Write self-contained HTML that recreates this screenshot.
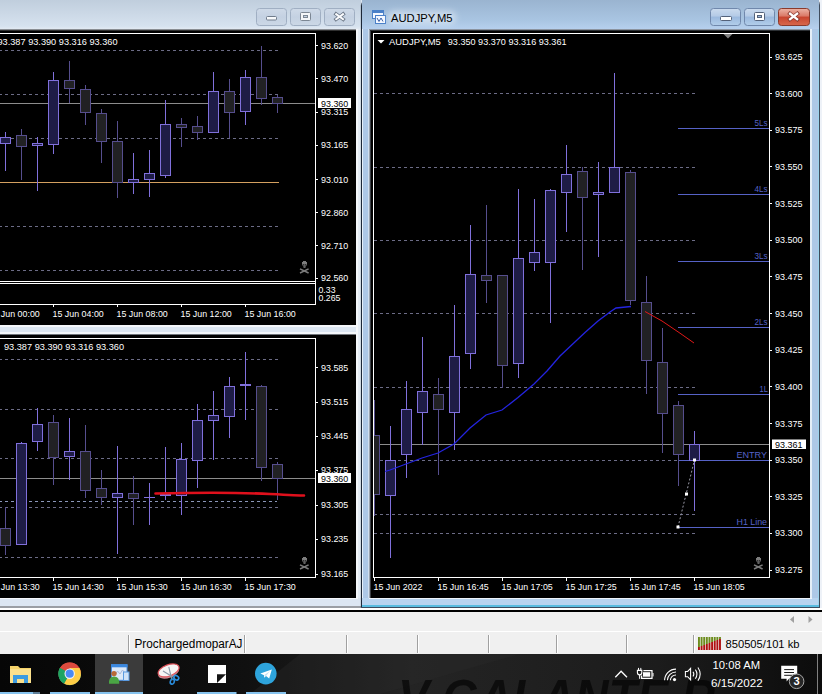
<!DOCTYPE html>
<html><head><meta charset="utf-8"><title>AUDJPY,M5</title>
<style>html,body{margin:0;padding:0;background:#000;overflow:hidden}svg{display:block}text{font-family:"Liberation Sans",sans-serif;white-space:pre}</style>
</head><body>
<svg width="822" height="694" viewBox="0 0 822 694">
<defs>
<linearGradient id="gInact" x1="0" y1="0" x2="0" y2="1"><stop offset="0" stop-color="#c0cedd"/><stop offset="0.9" stop-color="#d6e2ef"/><stop offset="1" stop-color="#e2eaf3"/></linearGradient>
<linearGradient id="gAct" x1="0" y1="0" x2="0" y2="1"><stop offset="0" stop-color="#9ab4d0"/><stop offset="0.7" stop-color="#a9c5e2"/><stop offset="1" stop-color="#b6d0ee"/></linearGradient>
<linearGradient id="gBtnI" x1="0" y1="0" x2="0" y2="1"><stop offset="0" stop-color="#cfdae8"/><stop offset="0.5" stop-color="#c4d1e2"/><stop offset="1" stop-color="#ccd8e6"/></linearGradient>
<linearGradient id="gBtnA" x1="0" y1="0" x2="0" y2="1"><stop offset="0" stop-color="#cbdbee"/><stop offset="0.45" stop-color="#b4cae6"/><stop offset="0.5" stop-color="#9bb9de"/><stop offset="1" stop-color="#b2ceea"/></linearGradient>
<linearGradient id="gClose" x1="0" y1="0" x2="0" y2="1"><stop offset="0" stop-color="#ecb4a6"/><stop offset="0.45" stop-color="#da7866"/><stop offset="0.5" stop-color="#c8442e"/><stop offset="1" stop-color="#d8684c"/></linearGradient>
<linearGradient id="gTask" x1="0" y1="0" x2="1" y2="0"><stop offset="0" stop-color="#060606"/><stop offset="0.3" stop-color="#101010"/><stop offset="0.5" stop-color="#242424"/><stop offset="0.8" stop-color="#1c1c1c"/><stop offset="1" stop-color="#0c0c0c"/></linearGradient>
</defs>
<rect x="0" y="0" width="361" height="608" fill="#dce6f2" />
<rect x="0" y="0" width="361" height="29" fill="url(#gInact)" />
<rect x="0" y="29" width="356" height="1" fill="#8a8e94" />
<rect x="0" y="30" width="356" height="1" fill="#303030" />
<rect x="0" y="31" width="356" height="294" fill="#000" />
<rect x="0" y="325" width="356" height="2" fill="#f4f7fb" />
<rect x="0" y="327" width="356" height="5" fill="#dce6f2" />
<rect x="0" y="332" width="356" height="2" fill="#f4f7fb" />
<rect x="0" y="334" width="356" height="1" fill="#70747a" />
<rect x="0" y="335" width="356" height="263" fill="#000" />
<rect x="356" y="29" width="2" height="579" fill="#f4f7fb" />
<rect x="358" y="29" width="3" height="579" fill="#e4ecf5" />
<rect x="0" y="598" width="361" height="8" fill="#dce6f2" />
<rect x="0" y="598" width="358" height="1" fill="#f4f7fb" />
<rect x="0" y="606" width="361" height="2" fill="#9a9ea4" />
<rect x="815" y="0" width="7" height="608" fill="#eef2f8" />
<path d="M361 608 V6 Q361 0 367 0 H814 Q819.5 0 819.5 6 V608 Z" fill="#adc8e7"/>
<path d="M361.5 608 V5 Q361.5 -0.5 367 -0.5 H814 Q819.2 -0.5 819.2 5 V608" fill="none" stroke="#1c2838" stroke-width="1.2"/>
<path d="M362 0 H361 V6 Q361 0 367 0 Z" fill="#dce6f2"/>
<rect x="362" y="0" width="457" height="29" fill="url(#gAct)" />
<rect x="362" y="29" width="1" height="578" fill="#e6f0fa" />
<rect x="363" y="29" width="5" height="578" fill="#adc8e7" />
<rect x="368" y="29" width="1" height="570" fill="#d0dff0" />
<rect x="812" y="29" width="6" height="578" fill="#adc8e7" />
<rect x="818" y="29" width="1" height="578" fill="#9cd4ee" />
<rect x="810" y="29" width="2" height="578" fill="#e4eef8" />
<rect x="362" y="598" width="456" height="8" fill="#b8d4f0" />
<rect x="369" y="598" width="443" height="1" fill="#eef4fb" />
<rect x="362" y="605" width="457" height="2" fill="#58bce0" />
<rect x="361" y="607" width="458" height="1" fill="#3c4c60" />
<rect x="369" y="29" width="441" height="1" fill="#8c94a0" />
<rect x="369" y="30" width="1" height="568" fill="#9aa4b0" />
<rect x="370" y="30" width="1" height="568" fill="#3c4046" />
<rect x="371" y="30" width="439" height="568" fill="#000" />
<rect x="370" y="30" width="440" height="1" fill="#2c3034" />
<rect x="0" y="608" width="822" height="2" fill="#fff" />
<rect x="0" y="610" width="822" height="2" fill="#000" />
<rect x="0" y="612" width="822" height="42" fill="#f0f0f0" />
<rect x="0" y="631" width="822" height="1" fill="#fff" />
<rect x="256.5" y="8.5" width="30" height="17" rx="3" fill="url(#gBtnI)" stroke="#a0afc3"/>
<rect x="290.5" y="8.5" width="30" height="17" rx="3" fill="url(#gBtnI)" stroke="#a0afc3"/>
<rect x="324.5" y="8.5" width="30" height="17" rx="3" fill="url(#gBtnI)" stroke="#a0afc3"/>
<rect x="266.5" y="16.5" width="10" height="3.5" rx="1" fill="#f8fafc" stroke="#707c8c"/>
<rect x="300.5" y="12.5" width="10" height="8" rx="1" fill="#f4f6f9" stroke="#7c8794"/><rect x="303.5" y="15.5" width="4" height="2" fill="#c4d1e2" stroke="#7c8794"/>
<g stroke-linecap="butt"><path d="M334.6 13 L344.6 20.4 M344.6 13 L334.6 20.4" stroke="#6c7888" stroke-width="3.6" fill="none"/><path d="M335.4 13.6 L343.8 19.8 M343.8 13.6 L335.4 19.8" stroke="#fafbfd" stroke-width="2" fill="none"/></g>
<rect x="710.5" y="8.5" width="30" height="17" rx="3" fill="url(#gBtnA)" stroke="#7088ac"/>
<rect x="744.5" y="8.5" width="30" height="17" rx="3" fill="url(#gBtnA)" stroke="#7088ac"/>
<rect x="778.5" y="8.5" width="31" height="17" rx="3" fill="url(#gClose)" stroke="#8a3a2c"/>
<rect x="720.5" y="16.5" width="11" height="4" rx="1" fill="#fff" stroke="#54627a"/>
<rect x="754.5" y="12.5" width="10" height="8" rx="1" fill="#fff" stroke="#54627a"/><rect x="757.5" y="15.5" width="4" height="2" fill="#9fbbdc" stroke="#54627a"/>
<g stroke-linecap="butt"><path d="M788.4 12.4 L798.8 20.4 M798.8 12.4 L788.4 20.4" stroke="#8a3a30" stroke-width="3.8" fill="none"/><path d="M789.2 13 L798 19.8 M798 13 L789.2 19.8" stroke="#fff" stroke-width="2.3" fill="none"/></g>
<g><rect x="372.5" y="10.5" width="11" height="8" fill="#f4f8ff" stroke="#4a80c8"/><rect x="372.5" y="10.5" width="11" height="2" fill="#4a80c8" stroke="#4a80c8"/><rect x="375.5" y="15.5" width="10" height="8" fill="#f4f8ff" stroke="#4a80c8"/><path d="M377 18 L379 21.5 L381 18 L383 21.5" fill="none" stroke="#3a60a8" stroke-width="1"/></g>
<filter id="fGlow" x="-20%" y="-80%" width="140%" height="260%"><feGaussianBlur stdDeviation="3"/></filter><rect x="388" y="11" width="68" height="13" rx="6" fill="#fff" opacity="0.45" filter="url(#fGlow)"/>
<text x="391" y="21.6" font-size="11" fill="#000" textLength="61.5" lengthAdjust="spacingAndGlyphs" >AUDJPY,M5</text>
<line x1="0" y1="50.5" x2="279" y2="50.5" stroke="#6c6c86" stroke-width="1" stroke-dasharray="3 3" stroke-dashoffset="1"/>
<line x1="0" y1="94.5" x2="279" y2="94.5" stroke="#6c6c86" stroke-width="1" stroke-dasharray="3 3" stroke-dashoffset="1"/>
<line x1="0" y1="138.5" x2="279" y2="138.5" stroke="#6c6c86" stroke-width="1" stroke-dasharray="3 3" stroke-dashoffset="1"/>
<line x1="0" y1="226.5" x2="279" y2="226.5" stroke="#6c6c86" stroke-width="1" stroke-dasharray="3 3" stroke-dashoffset="1"/>
<line x1="0" y1="270.5" x2="279" y2="270.5" stroke="#6c6c86" stroke-width="1" stroke-dasharray="3 3" stroke-dashoffset="1"/>
<rect x="0" y="103" width="315" height="1" fill="#8c8c8c" />
<rect x="0" y="182" width="279" height="1" fill="#d4a060" />
<g shape-rendering="crispEdges">
<rect x="5" y="132" width="1" height="39" fill="#8070dc" />
<rect x="0.5" y="137.5" width="10" height="6" fill="#1e1c46" stroke="#8070dc" stroke-width="1"/>
<rect x="21" y="129" width="1" height="51" fill="#564e8e" />
<rect x="16.5" y="135.5" width="10" height="11" fill="#212124" stroke="#564e8e" stroke-width="1"/>
<rect x="37" y="137" width="1" height="54" fill="#8070dc" />
<rect x="32.5" y="143.5" width="10" height="2" fill="#1e1c46" stroke="#8070dc" stroke-width="1"/>
<rect x="53" y="72" width="1" height="82" fill="#8070dc" />
<rect x="48.5" y="80.5" width="10" height="64" fill="#1e1c46" stroke="#8070dc" stroke-width="1"/>
<rect x="69" y="61" width="1" height="42" fill="#564e8e" />
<rect x="64.5" y="80.5" width="10" height="8" fill="#212124" stroke="#564e8e" stroke-width="1"/>
<rect x="85" y="85" width="1" height="40" fill="#564e8e" />
<rect x="80.5" y="89.5" width="10" height="23" fill="#212124" stroke="#564e8e" stroke-width="1"/>
<rect x="101" y="109" width="1" height="54" fill="#564e8e" />
<rect x="96.5" y="113.5" width="10" height="28" fill="#212124" stroke="#564e8e" stroke-width="1"/>
<rect x="117" y="121" width="1" height="77" fill="#564e8e" />
<rect x="112.5" y="141.5" width="10" height="41" fill="#212124" stroke="#564e8e" stroke-width="1"/>
<rect x="133" y="153" width="1" height="41" fill="#8070dc" />
<rect x="128.5" y="179.5" width="10" height="3" fill="#1e1c46" stroke="#8070dc" stroke-width="1"/>
<rect x="149" y="150" width="1" height="47" fill="#8070dc" />
<rect x="144.5" y="173.5" width="10" height="6" fill="#1e1c46" stroke="#8070dc" stroke-width="1"/>
<rect x="165" y="100" width="1" height="78" fill="#8070dc" />
<rect x="160.5" y="124.5" width="10" height="51" fill="#1e1c46" stroke="#8070dc" stroke-width="1"/>
<rect x="181" y="118" width="1" height="29" fill="#564e8e" />
<rect x="176.5" y="124.5" width="10" height="3" fill="#212124" stroke="#564e8e" stroke-width="1"/>
<rect x="197" y="116" width="1" height="24" fill="#564e8e" />
<rect x="192.5" y="126.5" width="10" height="6" fill="#212124" stroke="#564e8e" stroke-width="1"/>
<rect x="213" y="72" width="1" height="61" fill="#8070dc" />
<rect x="208.5" y="91.5" width="10" height="41" fill="#1e1c46" stroke="#8070dc" stroke-width="1"/>
<rect x="229" y="79" width="1" height="59" fill="#564e8e" />
<rect x="224.5" y="91.5" width="10" height="21" fill="#212124" stroke="#564e8e" stroke-width="1"/>
<rect x="245" y="70" width="1" height="55" fill="#8070dc" />
<rect x="240.5" y="77.5" width="10" height="34" fill="#1e1c46" stroke="#8070dc" stroke-width="1"/>
<rect x="261" y="46" width="1" height="59" fill="#564e8e" />
<rect x="256.5" y="77.5" width="10" height="21" fill="#212124" stroke="#564e8e" stroke-width="1"/>
<rect x="277" y="95" width="1" height="18" fill="#564e8e" />
<rect x="272.5" y="97.5" width="10" height="6" fill="#212124" stroke="#564e8e" stroke-width="1"/>
</g>
<rect x="0" y="33" width="316" height="1" fill="#fff" />
<rect x="315" y="33" width="1" height="272" fill="#fff" />
<rect x="0" y="281" width="316" height="1" fill="#fff" />
<rect x="0" y="283" width="316" height="1" fill="#fff" />
<rect x="0" y="304" width="316" height="1" fill="#fff" />
<text x="-2.5" y="44.5" font-size="9.8" fill="#fff" textLength="120" lengthAdjust="spacingAndGlyphs" >93.387 93.390 93.316 93.360</text>
<rect x="316" y="45" width="2" height="1" fill="#fff" />
<text x="321" y="48.7" font-size="9.8" fill="#fff" textLength="27.3" lengthAdjust="spacingAndGlyphs" >93.620</text>
<rect x="316" y="78" width="2" height="1" fill="#fff" />
<text x="321" y="81.7" font-size="9.8" fill="#fff" textLength="27.3" lengthAdjust="spacingAndGlyphs" >93.470</text>
<rect x="316" y="112" width="2" height="1" fill="#fff" />
<text x="321" y="115.2" font-size="9.8" fill="#fff" textLength="27.3" lengthAdjust="spacingAndGlyphs" >93.315</text>
<rect x="316" y="145" width="2" height="1" fill="#fff" />
<text x="321" y="148.2" font-size="9.8" fill="#fff" textLength="27.3" lengthAdjust="spacingAndGlyphs" >93.165</text>
<rect x="316" y="179" width="2" height="1" fill="#fff" />
<text x="321" y="182.7" font-size="9.8" fill="#fff" textLength="27.3" lengthAdjust="spacingAndGlyphs" >93.010</text>
<rect x="316" y="212" width="2" height="1" fill="#fff" />
<text x="321" y="215.7" font-size="9.8" fill="#fff" textLength="27.3" lengthAdjust="spacingAndGlyphs" >92.860</text>
<rect x="316" y="245" width="2" height="1" fill="#fff" />
<text x="321" y="248.7" font-size="9.8" fill="#fff" textLength="27.3" lengthAdjust="spacingAndGlyphs" >92.710</text>
<rect x="316" y="278" width="2" height="1" fill="#fff" />
<text x="321" y="281.2" font-size="9.8" fill="#fff" textLength="27.3" lengthAdjust="spacingAndGlyphs" >92.560</text>
<rect x="318" y="98" width="33" height="10" fill="#fff" />
<text x="321" y="106.5" font-size="9.8" fill="#000" textLength="27.3" lengthAdjust="spacingAndGlyphs" >93.360</text>
<text x="318.5" y="293" font-size="9.8" fill="#fff" textLength="17" lengthAdjust="spacingAndGlyphs" >0.33</text>
<text x="318.5" y="301" font-size="9.8" fill="#fff" textLength="22" lengthAdjust="spacingAndGlyphs" >0.265</text>
<text x="-11.5" y="316.8" font-size="9.8" fill="#fff" textLength="51.3" lengthAdjust="spacingAndGlyphs" >15 Jun 00:00</text>
<rect x="53" y="305" width="1" height="2" fill="#fff" />
<text x="52.5" y="316.8" font-size="9.8" fill="#fff" textLength="51.3" lengthAdjust="spacingAndGlyphs" >15 Jun 04:00</text>
<rect x="117" y="305" width="1" height="2" fill="#fff" />
<text x="116.5" y="316.8" font-size="9.8" fill="#fff" textLength="51.3" lengthAdjust="spacingAndGlyphs" >15 Jun 08:00</text>
<rect x="181" y="305" width="1" height="2" fill="#fff" />
<text x="180.5" y="316.8" font-size="9.8" fill="#fff" textLength="51.3" lengthAdjust="spacingAndGlyphs" >15 Jun 12:00</text>
<rect x="245" y="305" width="1" height="2" fill="#fff" />
<text x="244.5" y="316.8" font-size="9.8" fill="#fff" textLength="51.3" lengthAdjust="spacingAndGlyphs" >15 Jun 16:00</text>
<g fill="#7c7c7c">
<rect x="303" y="261" width="3" height="1"/>
<rect x="302" y="262" width="5" height="2.4"/>
<rect x="302" y="264.4" width="1" height="1"/><rect x="304" y="264.4" width="1" height="1"/><rect x="306" y="264.4" width="1" height="1"/>
<rect x="303" y="265.4" width="3" height="1"/>
<rect x="303.5" y="266.4" width="2" height="1.4"/>
</g>
<g stroke="#7c7c7c" stroke-width="1.5" stroke-linecap="butt"><line x1="300" y1="268.8" x2="308.6" y2="273"/><line x1="308.6" y1="268.8" x2="300" y2="273"/></g>
<line x1="0" y1="359.5" x2="279" y2="359.5" stroke="#6c6c86" stroke-width="1" stroke-dasharray="3 3" stroke-dashoffset="1"/>
<line x1="0" y1="409.5" x2="279" y2="409.5" stroke="#6c6c86" stroke-width="1" stroke-dasharray="3 3" stroke-dashoffset="1"/>
<line x1="0" y1="458.5" x2="279" y2="458.5" stroke="#6c6c86" stroke-width="1" stroke-dasharray="3 3" stroke-dashoffset="1"/>
<line x1="0" y1="507.5" x2="279" y2="507.5" stroke="#6c6c86" stroke-width="1" stroke-dasharray="3 3" stroke-dashoffset="1"/>
<line x1="0" y1="557.5" x2="279" y2="557.5" stroke="#6c6c86" stroke-width="1" stroke-dasharray="3 3" stroke-dashoffset="1"/>
<line x1="0" y1="501.5" x2="277" y2="501.5" stroke="#8a96b8" stroke-width="1" stroke-dasharray="3 3" stroke-dashoffset="1"/>
<rect x="0" y="478" width="315" height="1" fill="#8c8c8c" />
<g shape-rendering="crispEdges">
<rect x="5" y="507" width="1" height="48" fill="#564e8e" />
<rect x="0.5" y="528.5" width="10" height="17" fill="#212124" stroke="#564e8e" stroke-width="1"/>
<rect x="21" y="442" width="1" height="103" fill="#8070dc" />
<rect x="16.5" y="443.5" width="10" height="101" fill="#1e1c46" stroke="#8070dc" stroke-width="1"/>
<rect x="37" y="408" width="1" height="43" fill="#8070dc" />
<rect x="32.5" y="424.5" width="10" height="17" fill="#1e1c46" stroke="#8070dc" stroke-width="1"/>
<rect x="53" y="415" width="1" height="70" fill="#564e8e" />
<rect x="48.5" y="422.5" width="10" height="35" fill="#212124" stroke="#564e8e" stroke-width="1"/>
<rect x="69" y="418" width="1" height="62" fill="#8070dc" />
<rect x="64.5" y="451.5" width="10" height="5" fill="#1e1c46" stroke="#8070dc" stroke-width="1"/>
<rect x="85" y="425" width="1" height="73" fill="#564e8e" />
<rect x="80.5" y="451.5" width="10" height="39" fill="#212124" stroke="#564e8e" stroke-width="1"/>
<rect x="101" y="470" width="1" height="35" fill="#564e8e" />
<rect x="96.5" y="488.5" width="10" height="9" fill="#212124" stroke="#564e8e" stroke-width="1"/>
<rect x="117" y="446" width="1" height="108" fill="#8070dc" />
<rect x="112.5" y="493.5" width="10" height="4" fill="#1e1c46" stroke="#8070dc" stroke-width="1"/>
<rect x="133" y="476" width="1" height="49" fill="#564e8e" />
<rect x="128.5" y="493.5" width="10" height="5" fill="#212124" stroke="#564e8e" stroke-width="1"/>
<rect x="149" y="483" width="1" height="42" fill="#8070dc" />
<rect x="144" y="497" width="11" height="1" fill="#8070dc" />
<rect x="165" y="447" width="1" height="53" fill="#8070dc" />
<rect x="160" y="494" width="11" height="2" fill="#8070dc" />
<rect x="181" y="443" width="1" height="72" fill="#8070dc" />
<rect x="176.5" y="459.5" width="10" height="36" fill="#1e1c46" stroke="#8070dc" stroke-width="1"/>
<rect x="197" y="404" width="1" height="84" fill="#8070dc" />
<rect x="192.5" y="420.5" width="10" height="40" fill="#1e1c46" stroke="#8070dc" stroke-width="1"/>
<rect x="213" y="391" width="1" height="69" fill="#8070dc" />
<rect x="208.5" y="415.5" width="10" height="5" fill="#1e1c46" stroke="#8070dc" stroke-width="1"/>
<rect x="229" y="377" width="1" height="61" fill="#8070dc" />
<rect x="224.5" y="386.5" width="10" height="30" fill="#1e1c46" stroke="#8070dc" stroke-width="1"/>
<rect x="245" y="352" width="1" height="68" fill="#8070dc" />
<rect x="240" y="384" width="11" height="2" fill="#8070dc" />
<rect x="261" y="385" width="1" height="96" fill="#564e8e" />
<rect x="256.5" y="386.5" width="10" height="81" fill="#212124" stroke="#564e8e" stroke-width="1"/>
<rect x="277" y="462" width="1" height="38" fill="#564e8e" />
<rect x="272.5" y="464.5" width="10" height="14" fill="#212124" stroke="#564e8e" stroke-width="1"/>
</g>
<path d="M155.5 493.5 C200 492.5 240 492.5 270 494 S300 495.5 304 495.5" fill="none" stroke="#e0101c" stroke-width="2.6" stroke-linecap="round"/>
<rect x="0" y="338" width="316" height="1" fill="#fff" />
<rect x="315" y="338" width="1" height="240" fill="#fff" />
<rect x="0" y="577" width="316" height="1" fill="#fff" />
<text x="4" y="349.6" font-size="9.8" fill="#fff" textLength="120" lengthAdjust="spacingAndGlyphs" >93.387 93.390 93.316 93.360</text>
<rect x="316" y="367" width="2" height="1" fill="#fff" />
<text x="321" y="370.7" font-size="9.8" fill="#fff" textLength="27.3" lengthAdjust="spacingAndGlyphs" >93.585</text>
<rect x="316" y="402" width="2" height="1" fill="#fff" />
<text x="321" y="405.2" font-size="9.8" fill="#fff" textLength="27.3" lengthAdjust="spacingAndGlyphs" >93.515</text>
<rect x="316" y="436" width="2" height="1" fill="#fff" />
<text x="321" y="439.2" font-size="9.8" fill="#fff" textLength="27.3" lengthAdjust="spacingAndGlyphs" >93.445</text>
<rect x="316" y="470" width="2" height="1" fill="#fff" />
<text x="321" y="473.2" font-size="9.8" fill="#fff" textLength="27.3" lengthAdjust="spacingAndGlyphs" >93.375</text>
<rect x="316" y="505" width="2" height="1" fill="#fff" />
<text x="321" y="508.2" font-size="9.8" fill="#fff" textLength="27.3" lengthAdjust="spacingAndGlyphs" >93.305</text>
<rect x="316" y="539" width="2" height="1" fill="#fff" />
<text x="321" y="542.2" font-size="9.8" fill="#fff" textLength="27.3" lengthAdjust="spacingAndGlyphs" >93.235</text>
<rect x="316" y="574" width="2" height="1" fill="#fff" />
<text x="321" y="577.2" font-size="9.8" fill="#fff" textLength="27.3" lengthAdjust="spacingAndGlyphs" >93.165</text>
<rect x="318" y="473" width="33" height="10" fill="#fff" />
<text x="321" y="481.5" font-size="9.8" fill="#000" textLength="27.3" lengthAdjust="spacingAndGlyphs" >93.360</text>
<text x="-11.5" y="590.0" font-size="9.8" fill="#fff" textLength="51.3" lengthAdjust="spacingAndGlyphs" >15 Jun 13:30</text>
<rect x="53" y="578" width="1" height="3" fill="#fff" />
<text x="52.5" y="590.0" font-size="9.8" fill="#fff" textLength="51.3" lengthAdjust="spacingAndGlyphs" >15 Jun 14:30</text>
<rect x="117" y="578" width="1" height="3" fill="#fff" />
<text x="116.5" y="590.0" font-size="9.8" fill="#fff" textLength="51.3" lengthAdjust="spacingAndGlyphs" >15 Jun 15:30</text>
<rect x="181" y="578" width="1" height="3" fill="#fff" />
<text x="180.5" y="590.0" font-size="9.8" fill="#fff" textLength="51.3" lengthAdjust="spacingAndGlyphs" >15 Jun 16:30</text>
<rect x="245" y="578" width="1" height="3" fill="#fff" />
<text x="244.5" y="590.0" font-size="9.8" fill="#fff" textLength="51.3" lengthAdjust="spacingAndGlyphs" >15 Jun 17:30</text>
<g fill="#7c7c7c">
<rect x="303" y="557" width="3" height="1"/>
<rect x="302" y="558" width="5" height="2.4"/>
<rect x="302" y="560.4" width="1" height="1"/><rect x="304" y="560.4" width="1" height="1"/><rect x="306" y="560.4" width="1" height="1"/>
<rect x="303" y="561.4" width="3" height="1"/>
<rect x="303.5" y="562.4" width="2" height="1.4"/>
</g>
<g stroke="#7c7c7c" stroke-width="1.5" stroke-linecap="butt"><line x1="300" y1="564.8" x2="308.6" y2="569"/><line x1="308.6" y1="564.8" x2="300" y2="569"/></g>
<line x1="374" y1="93.5" x2="696" y2="93.5" stroke="#6c6c86" stroke-width="1" stroke-dasharray="3 3" stroke-dashoffset="0"/>
<line x1="374" y1="167.5" x2="696" y2="167.5" stroke="#6c6c86" stroke-width="1" stroke-dasharray="3 3" stroke-dashoffset="0"/>
<line x1="374" y1="240.5" x2="696" y2="240.5" stroke="#6c6c86" stroke-width="1" stroke-dasharray="3 3" stroke-dashoffset="0"/>
<line x1="374" y1="313.5" x2="696" y2="313.5" stroke="#6c6c86" stroke-width="1" stroke-dasharray="3 3" stroke-dashoffset="0"/>
<line x1="374" y1="387.5" x2="696" y2="387.5" stroke="#6c6c86" stroke-width="1" stroke-dasharray="3 3" stroke-dashoffset="0"/>
<line x1="374" y1="514.5" x2="696" y2="514.5" stroke="#6c6c86" stroke-width="1" stroke-dasharray="3 3" stroke-dashoffset="0"/>
<line x1="374" y1="533.5" x2="696" y2="533.5" stroke="#6c6c86" stroke-width="1" stroke-dasharray="3 3" stroke-dashoffset="0"/>
<line x1="374" y1="460.5" x2="679" y2="460.5" stroke="#6c6c86" stroke-width="1" stroke-dasharray="3 3" stroke-dashoffset="0"/>
<rect x="374" y="444" width="395" height="1" fill="#8c8c8c" />
<rect x="678" y="128" width="91" height="1" fill="#5662c6" />
<text x="754.5" y="125.5" font-size="9.8" fill="#5662c6" textLength="13" lengthAdjust="spacingAndGlyphs" >5Ls</text>
<rect x="678" y="194" width="91" height="1" fill="#5662c6" />
<text x="754.5" y="191.5" font-size="9.8" fill="#5662c6" textLength="13" lengthAdjust="spacingAndGlyphs" >4Ls</text>
<rect x="678" y="261" width="91" height="1" fill="#5662c6" />
<text x="754.5" y="258.5" font-size="9.8" fill="#5662c6" textLength="13" lengthAdjust="spacingAndGlyphs" >3Ls</text>
<rect x="678" y="327" width="91" height="1" fill="#5662c6" />
<text x="754.5" y="324.5" font-size="9.8" fill="#5662c6" textLength="13" lengthAdjust="spacingAndGlyphs" >2Ls</text>
<rect x="678" y="394" width="91" height="1" fill="#5662c6" />
<text x="759.5" y="391.5" font-size="9.8" fill="#5662c6" textLength="8.3" lengthAdjust="spacingAndGlyphs" >1L</text>
<rect x="678" y="460" width="91" height="1" fill="#5662c6" />
<text x="736.5" y="457.5" font-size="9.8" fill="#5662c6" textLength="30.5" lengthAdjust="spacingAndGlyphs" >ENTRY</text>
<rect x="678" y="527" width="91" height="1" fill="#5662c6" />
<text x="736.5" y="524.5" font-size="9.8" fill="#5662c6" textLength="30.5" lengthAdjust="spacingAndGlyphs" >H1 Line</text>
<clipPath id="cpR"><rect x="374" y="34" width="395" height="543"/></clipPath>
<g shape-rendering="crispEdges" clip-path="url(#cpR)">
<rect x="374" y="400" width="1" height="116" fill="#564e8e" />
<rect x="369.5" y="435.5" width="10" height="59" fill="#212124" stroke="#564e8e" stroke-width="1"/>
<rect x="390" y="426" width="1" height="132" fill="#8070dc" />
<rect x="385.5" y="460.5" width="10" height="35" fill="#1e1c46" stroke="#8070dc" stroke-width="1"/>
<rect x="406" y="381" width="1" height="97" fill="#8070dc" />
<rect x="401.5" y="409.5" width="10" height="45" fill="#1e1c46" stroke="#8070dc" stroke-width="1"/>
<rect x="422" y="337" width="1" height="108" fill="#8070dc" />
<rect x="417.5" y="391.5" width="10" height="21" fill="#1e1c46" stroke="#8070dc" stroke-width="1"/>
<rect x="438" y="378" width="1" height="97" fill="#564e8e" />
<rect x="433.5" y="394.5" width="10" height="15" fill="#212124" stroke="#564e8e" stroke-width="1"/>
<rect x="454" y="305" width="1" height="145" fill="#8070dc" />
<rect x="449.5" y="356.5" width="10" height="56" fill="#1e1c46" stroke="#8070dc" stroke-width="1"/>
<rect x="470" y="225" width="1" height="144" fill="#8070dc" />
<rect x="465.5" y="274.5" width="10" height="79" fill="#1e1c46" stroke="#8070dc" stroke-width="1"/>
<rect x="486" y="205" width="1" height="98" fill="#564e8e" />
<rect x="481.5" y="275.5" width="10" height="5" fill="#212124" stroke="#564e8e" stroke-width="1"/>
<rect x="502" y="275" width="1" height="113" fill="#564e8e" />
<rect x="497.5" y="275.5" width="10" height="90" fill="#212124" stroke="#564e8e" stroke-width="1"/>
<rect x="518" y="189" width="1" height="189" fill="#8070dc" />
<rect x="513.5" y="258.5" width="10" height="105" fill="#1e1c46" stroke="#8070dc" stroke-width="1"/>
<rect x="534" y="199" width="1" height="72" fill="#8070dc" />
<rect x="529.5" y="252.5" width="10" height="10" fill="#1e1c46" stroke="#8070dc" stroke-width="1"/>
<rect x="550" y="189" width="1" height="134" fill="#8070dc" />
<rect x="545.5" y="190.5" width="10" height="72" fill="#1e1c46" stroke="#8070dc" stroke-width="1"/>
<rect x="566" y="145" width="1" height="87" fill="#8070dc" />
<rect x="561.5" y="174.5" width="10" height="18" fill="#1e1c46" stroke="#8070dc" stroke-width="1"/>
<rect x="582" y="167" width="1" height="103" fill="#564e8e" />
<rect x="577.5" y="171.5" width="10" height="26" fill="#212124" stroke="#564e8e" stroke-width="1"/>
<rect x="598" y="162" width="1" height="95" fill="#8070dc" />
<rect x="593.5" y="192.5" width="10" height="2" fill="#1e1c46" stroke="#8070dc" stroke-width="1"/>
<rect x="614" y="73" width="1" height="120" fill="#8070dc" />
<rect x="609.5" y="167.5" width="10" height="25" fill="#1e1c46" stroke="#8070dc" stroke-width="1"/>
<rect x="630" y="170" width="1" height="135" fill="#564e8e" />
<rect x="625.5" y="172.5" width="10" height="128" fill="#212124" stroke="#564e8e" stroke-width="1"/>
<rect x="646" y="276" width="1" height="118" fill="#564e8e" />
<rect x="641.5" y="302.5" width="10" height="58" fill="#212124" stroke="#564e8e" stroke-width="1"/>
<rect x="662" y="328" width="1" height="125" fill="#564e8e" />
<rect x="657.5" y="362.5" width="10" height="51" fill="#212124" stroke="#564e8e" stroke-width="1"/>
<rect x="678" y="401" width="1" height="85" fill="#564e8e" />
<rect x="673.5" y="405.5" width="10" height="49" fill="#212124" stroke="#564e8e" stroke-width="1"/>
<rect x="694" y="431" width="1" height="80" fill="#8070dc" />
<rect x="689.5" y="444.5" width="10" height="16" fill="#1e1c46" stroke="#8070dc" stroke-width="1"/>
</g>
<polyline fill="none" stroke="#2424e0" stroke-width="1.3" points="385,471.5 390,470 406,464 422,458 438,453 454,444 470,428 486,415 502,410 518,397.5 534,384 547,371 560,356 585,332.5 598,321 610,312 616,308 631,306.5"/>
<polyline fill="none" stroke="#e01818" stroke-width="1" points="645,311.5 662,321 679,332.5 694,343"/>
<line x1="678" y1="527" x2="694.5" y2="460" stroke="#9a9aa8" stroke-width="1" stroke-dasharray="2 2"/>
<rect x="676.5" y="525.5" width="3" height="3" fill="#fff" />
<rect x="685.0" y="492.5" width="3" height="3" fill="#fff" />
<rect x="693.0" y="458.5" width="3" height="3" fill="#fff" />
<rect x="373" y="33" width="397" height="1" fill="#fff" />
<rect x="373" y="33" width="1" height="545" fill="#fff" />
<rect x="769" y="33" width="1" height="545" fill="#fff" />
<rect x="373" y="577" width="397" height="1" fill="#fff" />
<path d="M723.5 34 H732.5 L728 38.5 Z" fill="#808080"/>
<path d="M377.5 40 H384.5 L381 43.5 Z" fill="#fff"/>
<text x="389" y="44.8" font-size="9.8" fill="#fff" textLength="51.8" lengthAdjust="spacingAndGlyphs" >AUDJPY,M5</text>
<text x="447.8" y="44.8" font-size="9.8" fill="#fff" textLength="118.7" lengthAdjust="spacingAndGlyphs" >93.350 93.370 93.316 93.361</text>
<rect x="770" y="57" width="2" height="1" fill="#fff" />
<text x="775" y="60.0" font-size="9.8" fill="#fff" textLength="27.5" lengthAdjust="spacingAndGlyphs" >93.625</text>
<rect x="770" y="93" width="2" height="1" fill="#fff" />
<text x="775" y="96.65" font-size="9.8" fill="#fff" textLength="27.5" lengthAdjust="spacingAndGlyphs" >93.600</text>
<rect x="770" y="130" width="2" height="1" fill="#fff" />
<text x="775" y="133.3" font-size="9.8" fill="#fff" textLength="27.5" lengthAdjust="spacingAndGlyphs" >93.575</text>
<rect x="770" y="166" width="2" height="1" fill="#fff" />
<text x="775" y="169.95" font-size="9.8" fill="#fff" textLength="27.5" lengthAdjust="spacingAndGlyphs" >93.550</text>
<rect x="770" y="203" width="2" height="1" fill="#fff" />
<text x="775" y="206.6" font-size="9.8" fill="#fff" textLength="27.5" lengthAdjust="spacingAndGlyphs" >93.525</text>
<rect x="770" y="240" width="2" height="1" fill="#fff" />
<text x="775" y="243.25" font-size="9.8" fill="#fff" textLength="27.5" lengthAdjust="spacingAndGlyphs" >93.500</text>
<rect x="770" y="276" width="2" height="1" fill="#fff" />
<text x="775" y="279.9" font-size="9.8" fill="#fff" textLength="27.5" lengthAdjust="spacingAndGlyphs" >93.475</text>
<rect x="770" y="313" width="2" height="1" fill="#fff" />
<text x="775" y="316.55" font-size="9.8" fill="#fff" textLength="27.5" lengthAdjust="spacingAndGlyphs" >93.450</text>
<rect x="770" y="350" width="2" height="1" fill="#fff" />
<text x="775" y="353.2" font-size="9.8" fill="#fff" textLength="27.5" lengthAdjust="spacingAndGlyphs" >93.425</text>
<rect x="770" y="386" width="2" height="1" fill="#fff" />
<text x="775" y="389.84999999999997" font-size="9.8" fill="#fff" textLength="27.5" lengthAdjust="spacingAndGlyphs" >93.400</text>
<rect x="770" y="423" width="2" height="1" fill="#fff" />
<text x="775" y="426.5" font-size="9.8" fill="#fff" textLength="27.5" lengthAdjust="spacingAndGlyphs" >93.375</text>
<rect x="770" y="460" width="2" height="1" fill="#fff" />
<text x="775" y="463.15" font-size="9.8" fill="#fff" textLength="27.5" lengthAdjust="spacingAndGlyphs" >93.350</text>
<rect x="770" y="496" width="2" height="1" fill="#fff" />
<text x="775" y="499.79999999999995" font-size="9.8" fill="#fff" textLength="27.5" lengthAdjust="spacingAndGlyphs" >93.325</text>
<rect x="770" y="533" width="2" height="1" fill="#fff" />
<text x="775" y="536.45" font-size="9.8" fill="#fff" textLength="27.5" lengthAdjust="spacingAndGlyphs" >93.300</text>
<rect x="770" y="570" width="2" height="1" fill="#fff" />
<text x="775" y="573.1" font-size="9.8" fill="#fff" textLength="27.5" lengthAdjust="spacingAndGlyphs" >93.275</text>
<rect x="772" y="439.5" width="34" height="9.5" fill="#fff" />
<text x="775" y="448" font-size="9.8" fill="#000" textLength="27.5" lengthAdjust="spacingAndGlyphs" >93.361</text>
<rect x="374" y="578" width="1" height="3" fill="#fff" />
<text x="373.5" y="590.3" font-size="9.8" fill="#fff" textLength="49" lengthAdjust="spacingAndGlyphs" >15 Jun 2022</text>
<rect x="438" y="578" width="1" height="3" fill="#fff" />
<text x="437.5" y="590.3" font-size="9.8" fill="#fff" textLength="51.3" lengthAdjust="spacingAndGlyphs" >15 Jun 16:45</text>
<rect x="502" y="578" width="1" height="3" fill="#fff" />
<text x="501.5" y="590.3" font-size="9.8" fill="#fff" textLength="51.3" lengthAdjust="spacingAndGlyphs" >15 Jun 17:05</text>
<rect x="566" y="578" width="1" height="3" fill="#fff" />
<text x="565.5" y="590.3" font-size="9.8" fill="#fff" textLength="51.3" lengthAdjust="spacingAndGlyphs" >15 Jun 17:25</text>
<rect x="630" y="578" width="1" height="3" fill="#fff" />
<text x="629.5" y="590.3" font-size="9.8" fill="#fff" textLength="51.3" lengthAdjust="spacingAndGlyphs" >15 Jun 17:45</text>
<rect x="694" y="578" width="1" height="3" fill="#fff" />
<text x="693.5" y="590.3" font-size="9.8" fill="#fff" textLength="51.3" lengthAdjust="spacingAndGlyphs" >15 Jun 18:05</text>
<g fill="#7c7c7c">
<rect x="757" y="557" width="3" height="1"/>
<rect x="756" y="558" width="5" height="2.4"/>
<rect x="756" y="560.4" width="1" height="1"/><rect x="758" y="560.4" width="1" height="1"/><rect x="760" y="560.4" width="1" height="1"/>
<rect x="757" y="561.4" width="3" height="1"/>
<rect x="757.5" y="562.4" width="2" height="1.4"/>
</g>
<g stroke="#7c7c7c" stroke-width="1.5" stroke-linecap="butt"><line x1="754" y1="564.8" x2="762.6" y2="569"/><line x1="762.6" y1="564.8" x2="754" y2="569"/></g>
<path d="M794 616 V623 L790 619.5 Z" fill="#a0a0a0"/><path d="M808.5 616 V623 L812.5 619.5 Z" fill="#a0a0a0"/>
<rect x="128" y="635" width="1" height="18" fill="#a0a0a0" />
<rect x="129" y="635" width="1" height="18" fill="#fff" />
<rect x="244" y="635" width="1" height="18" fill="#a0a0a0" />
<rect x="245" y="635" width="1" height="18" fill="#fff" />
<rect x="346" y="635" width="1" height="18" fill="#a0a0a0" />
<rect x="347" y="635" width="1" height="18" fill="#fff" />
<rect x="417" y="635" width="1" height="18" fill="#a0a0a0" />
<rect x="418" y="635" width="1" height="18" fill="#fff" />
<rect x="488" y="635" width="1" height="18" fill="#a0a0a0" />
<rect x="489" y="635" width="1" height="18" fill="#fff" />
<rect x="556" y="635" width="1" height="18" fill="#a0a0a0" />
<rect x="557" y="635" width="1" height="18" fill="#fff" />
<rect x="626" y="635" width="1" height="18" fill="#a0a0a0" />
<rect x="627" y="635" width="1" height="18" fill="#fff" />
<rect x="693" y="635" width="1" height="18" fill="#a0a0a0" />
<rect x="694" y="635" width="1" height="18" fill="#fff" />
<text x="134.5" y="647.6" font-size="12" fill="#000" textLength="108" lengthAdjust="spacingAndGlyphs" >ProchargedmoparAJ</text>
<rect x="698.00" y="637" width="1.9" height="10.0" fill="#6c8c1c"/><rect x="698.00" y="647.0" width="1.9" height="3.0" fill="#b01010"/>
<rect x="700.63" y="637" width="1.9" height="9.0" fill="#6c8c1c"/><rect x="700.63" y="646.0" width="1.9" height="4.0" fill="#b01010"/>
<rect x="703.26" y="637" width="1.9" height="8.0" fill="#6c8c1c"/><rect x="703.26" y="645.0" width="1.9" height="5.0" fill="#b01010"/>
<rect x="705.89" y="637" width="1.9" height="7.0" fill="#6c8c1c"/><rect x="705.89" y="644.0" width="1.9" height="6.0" fill="#b01010"/>
<rect x="708.52" y="637" width="1.9" height="6.0" fill="#6c8c1c"/><rect x="708.52" y="643.0" width="1.9" height="7.0" fill="#b01010"/>
<rect x="711.15" y="637" width="1.9" height="5.0" fill="#6c8c1c"/><rect x="711.15" y="642.0" width="1.9" height="8.0" fill="#b01010"/>
<rect x="713.78" y="637" width="1.9" height="4.0" fill="#6c8c1c"/><rect x="713.78" y="641.0" width="1.9" height="9.0" fill="#b01010"/>
<rect x="716.41" y="637" width="1.9" height="3.0" fill="#6c8c1c"/><rect x="716.41" y="640.0" width="1.9" height="10.0" fill="#b01010"/>
<rect x="719.04" y="637" width="1.9" height="2.0" fill="#6c8c1c"/><rect x="719.04" y="639.0" width="1.9" height="11.0" fill="#b01010"/>
<text x="725.5" y="647.6" font-size="11.5" fill="#000" textLength="74" lengthAdjust="spacingAndGlyphs" >850505/101 kb</text>
<rect x="0" y="654" width="822" height="40" fill="url(#gTask)" />
<path d="M300 654 L520 654 L380 694 L250 694 Z" fill="#2a2a2a" opacity="0.35"/>
<text x="398" y="715" font-size="50" fill="#000" textLength="317" lengthAdjust="spacingAndGlyphs" font-style="italic" font-weight="bold" opacity="0.6">V GALANTE R</text>
<rect x="95" y="654" width="48" height="40" fill="#3b3b3b" />
<rect x="0" y="692" width="33" height="2" fill="#86c3ee" />
<rect x="33" y="692" width="7" height="2" fill="#5f7f98" />
<rect x="50" y="692" width="40" height="2" fill="#86c3ee" />
<rect x="95" y="692" width="48" height="2" fill="#86c3ee" />
<rect x="197" y="692" width="39.5" height="2" fill="#86c3ee" />
<rect x="246" y="692" width="40" height="2" fill="#86c3ee" />
<g><path d="M10 666 H18 L20 668 H31 V683 H10 Z" fill="#f6d36a"/><rect x="10" y="669" width="21" height="14" fill="#fbe08c"/><path d="M13 675 H28 V683 H24 V679 H17 V683 H13 Z" fill="#3c9be0"/></g>
<g><circle cx="69.7" cy="673.7" r="11.3" fill="#dd4b3e"/><path d="M69.7 673.7 L59.9 668.05 A11.3 11.3 0 0 0 64.05 683.5 Z" fill="#1da462"/><path d="M69.7 673.7 L59.9 668.05 A11.3 11.3 0 0 0 64.05 683.5 L69.7 673.7 Z" fill="#1da462"/><path d="M64.05 683.5 A11.3 11.3 0 0 0 81 673.7 L69.7 673.7 Z" fill="#1da462"/><path d="M69.7 673.7 L64.05 683.5 A11.3 11.3 0 0 0 79.5 668.05 L69.7 668.05 Z" fill="#ffcd46"/><path d="M59.9 668.05 A11.3 11.3 0 0 1 79.5 668.05 L69.7 668.05 Z" fill="#dd4b3e"/><path d="M59.9 668.05 L64.05 683.5 L69.7 673.7 Z" fill="#1da462"/><circle cx="69.7" cy="673.7" r="5.2" fill="#f4f4f4"/><circle cx="69.7" cy="673.7" r="4.1" fill="#4a8af4"/></g>
<g><rect x="111.5" y="664.8" width="15.5" height="15.5" fill="#dce9f8" stroke="#4a8ee0"/><rect x="111" y="664.3" width="16.5" height="3" fill="#3a88e0"/><path d="M115 675 L117.5 671 L120 674 L122.5 670 L125 673" fill="none" stroke="#a8b8dc" stroke-width="1"/><rect x="123.5" y="672" width="5.5" height="8.5" fill="#cfe2f8" stroke="#5a9ae0"/><circle cx="114" cy="673.6" r="2.7" fill="#b86a38"/><path d="M109 683.8 Q108.6 676.6 114 676.6 Q119.6 676.6 119.2 683.8 Z" fill="#4aa444"/></g>
<g><ellipse cx="168.6" cy="672.2" rx="11" ry="5.6" transform="rotate(-20 168.6 672.2)" fill="#c88890"/><ellipse cx="168.6" cy="670.4" rx="11" ry="5.6" transform="rotate(-20 168.6 670.4)" fill="#f6f4f4" stroke="#e0525a" stroke-width="1.1"/><path d="M163 671 L174.5 678 M168.8 666.8 L172 680.5" stroke="#8a98a8" stroke-width="1.1" fill="none"/><ellipse cx="176.3" cy="677.8" rx="2.6" ry="2" transform="rotate(35 176.3 677.8)" fill="none" stroke="#2a8cdc" stroke-width="1.6"/><ellipse cx="172.3" cy="681.6" rx="2" ry="2.6" transform="rotate(15 172.3 681.6)" fill="none" stroke="#2a8cdc" stroke-width="1.6"/></g>
<rect x="208" y="665" width="18" height="18" fill="#fff"/><path d="M217 674.2 H226 L217 683 Z" fill="#141414"/>
<circle cx="265.8" cy="673.6" r="10.8" fill="#2ea4dc"/><path d="M260.4 673.6 L271.8 669.4 L269.2 678.6 L266 676 L264.2 677.8 L264 675.2 Z" fill="#fff"/><path d="M264 675.2 L270 671 L266 676 Z" fill="#c4e0f2"/>
<path d="M615.3 677.3 L621.1 671.3 L627 677.3" fill="none" stroke="#fff" stroke-width="1.3"/>
<g fill="none" stroke="#fff" stroke-width="1.2"><path d="M643.4 670.6 H652 V678.3 H641.6 V675.6"/><path d="M637.4 670.4 H641.8 V672.6 Q641.8 674.9 639.6 674.9 Q637.4 674.9 637.4 672.6 Z" stroke-width="1.1"/></g><rect x="638" y="667.9" width="1" height="2.4" fill="#fff"/><rect x="640.3" y="667.9" width="1" height="2.4" fill="#fff"/><rect x="639.1" y="675" width="1.1" height="3.8" fill="#fff"/><rect x="643" y="672.2" width="7.2" height="4.5" fill="#fff"/><rect x="652.6" y="673" width="0.9" height="3.4" fill="#fff"/>
<g fill="none" stroke="#fff" stroke-width="1.05"><path d="M664.6 680.3 A11.4 11.4 0 0 1 676 669.1"/><path d="M667.4 680.3 A8.6 8.6 0 0 1 676 671.9"/><path d="M670.4 680.3 A5.6 5.6 0 0 1 676 674.9"/></g><circle cx="674.5" cy="679.6" r="1.6" fill="#fff"/>
<g fill="none" stroke="#fff" stroke-width="1.05"><path d="M685.4 671.4 H687.7 L690.6 668.4 V679.8 L687.7 676.7 H685.4 Z"/><path d="M693 671.8 Q694.7 674.1 693 676.5"/><path d="M695.4 669.6 Q698.5 674.1 695.4 678.8"/><path d="M697.9 667.5 Q702.5 674.1 697.9 680.8"/></g>
<text x="712.5" y="668.8" font-size="11.8" fill="#fff" textLength="47.6" lengthAdjust="spacingAndGlyphs" >10:08 AM</text>
<text x="711" y="687" font-size="11.8" fill="#fff" textLength="51.7" lengthAdjust="spacingAndGlyphs" >6/15/2022</text>
<path d="M781.2 665.8 H797.2 V678.8 H789 L786.6 681.6 V678.8 H781.2 Z" fill="#fff"/><path d="M784.2 669.6 H794 M784.2 672.5 H794 M784.2 675.3 H794" stroke="#1a1a1a" stroke-width="1"/>
<circle cx="796.6" cy="681.3" r="7.3" fill="#262626" stroke="#a8a8a8" stroke-width="1"/>
<text x="793.5" y="685.3" font-size="11.2" fill="#fff" font-weight="bold">3</text>
<rect x="817" y="654" width="1" height="40" fill="#808080" />
</svg></body></html>
